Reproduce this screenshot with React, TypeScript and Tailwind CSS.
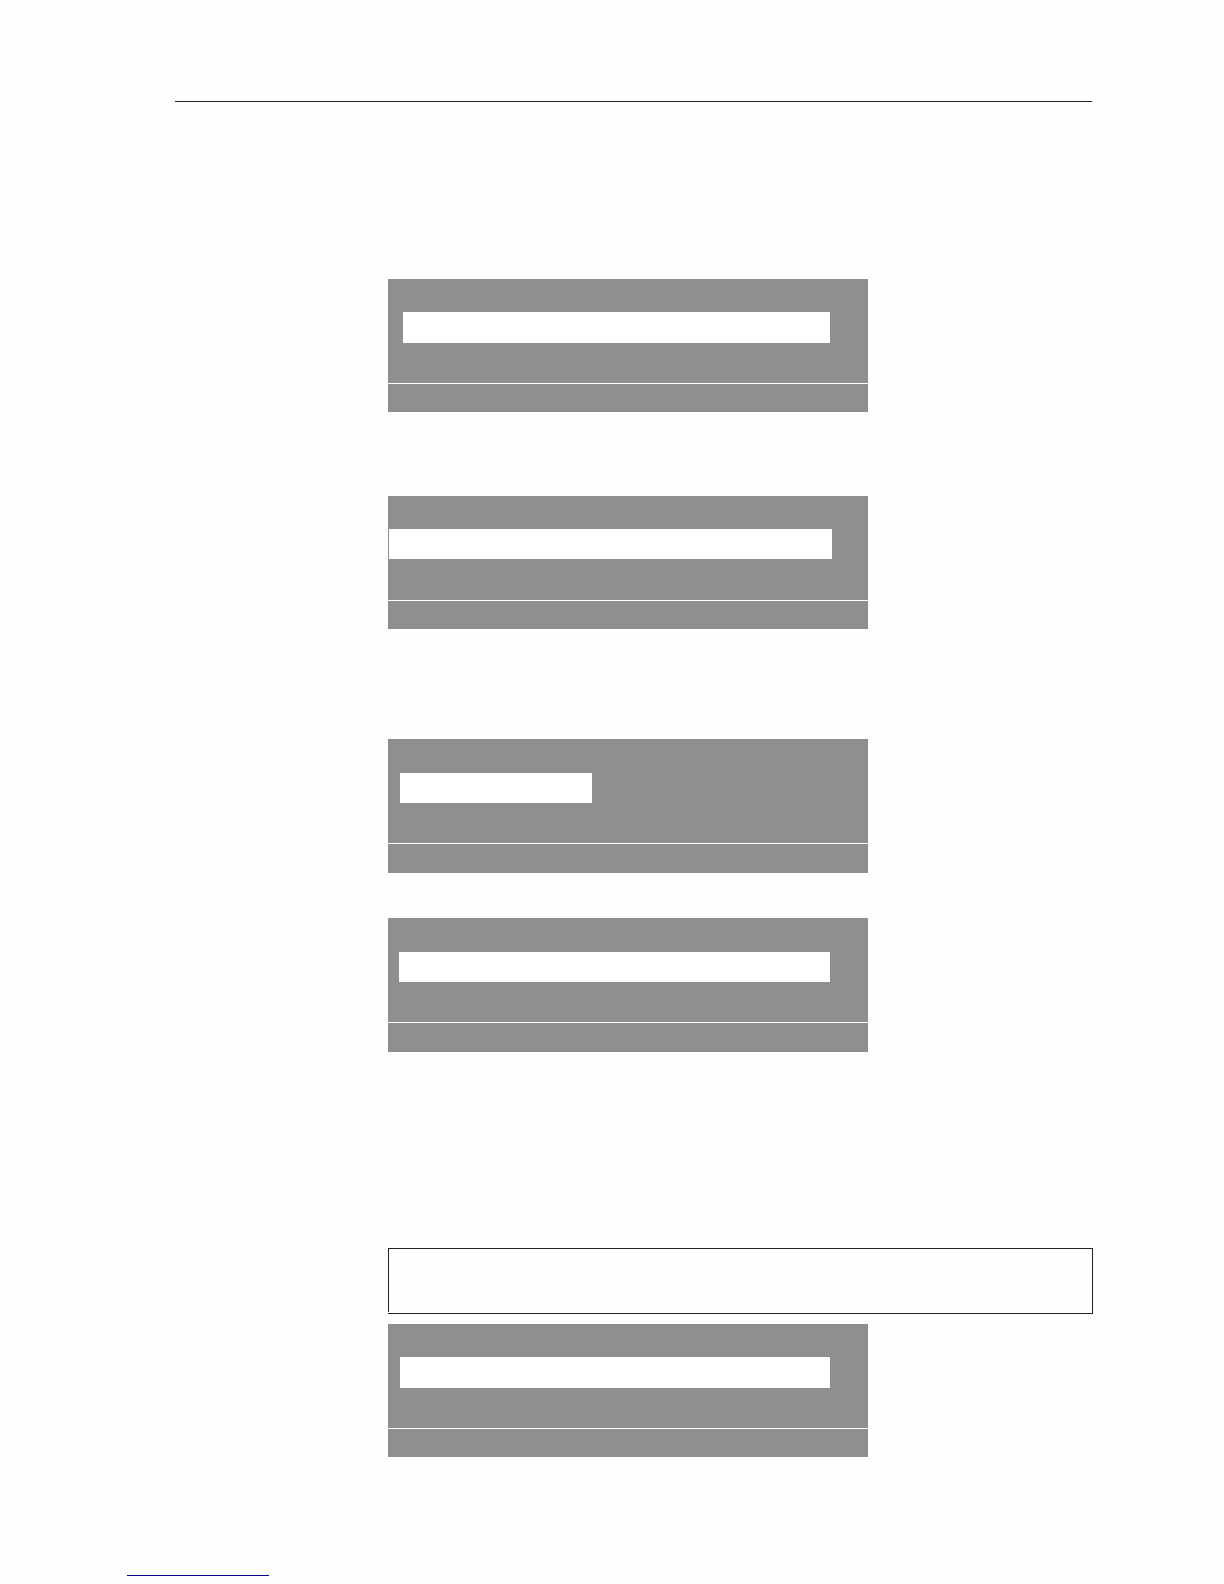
import React from 'react';

interface DisplayPanelProps {
  className?: string;
  body?: string;
  bar: string;
  footer?: string;
}

// Display with one highlighted row and a footer strip
const DisplayPanel: React.FC<DisplayPanelProps> = ({
  className = '',
  body = 'pt-[33px]',
  bar,
  footer = 'h-7',
}) => {
  return (
    <section className={`w-full max-w-[480px] ${className}`}>
      <div className={`h-[104px] bg-[#908e8f] ${body}`}>
        <div className={`bg-white ${bar}`} />
      </div>
      <div className={`mt-px bg-[#908e8f] ${footer}`} />
    </section>
  );
};

export default function App() {
  return (
    <div className="min-h-screen bg-[#fefefe] pt-[101px] pb-2">
      <header className="ml-[175px] mr-[132px]">
        <hr className="border-t border-[#231f20]" />
      </header>

      <main className="ml-[388px] mr-[131px] pt-[177px]">
        <DisplayPanel bar="ml-[15px] mr-[38px] h-[31px]" />
        <DisplayPanel className="mt-[84px]" bar="ml-px mr-9 h-[30px]" />
        <DisplayPanel
          className="mt-[110px]"
          body="pt-[34px]"
          bar="ml-3 w-48 h-[30px]"
          footer="h-[29px]"
        />
        <DisplayPanel
          className="mt-[45px]"
          body="pt-[34px]"
          bar="ml-[11px] mr-[38px] h-[30px]"
          footer="h-[29px]"
        />

        {/* Note box */}
        <aside className="mt-[196px] border-y border-r border-[#231f20]">
          <div className="mb-px h-[63px] border-l border-[#231f20]" />
        </aside>

        <DisplayPanel className="mt-2.5" bar="ml-3 mr-[38px] h-[31px]" />
      </main>

      <footer className="mt-[98px] ml-[127px]">
        <a
          href="#"
          aria-label="Website"
          className="block h-[21px] w-[142px] border-b border-[#00008b]"
        />
      </footer>
    </div>
  );
}
